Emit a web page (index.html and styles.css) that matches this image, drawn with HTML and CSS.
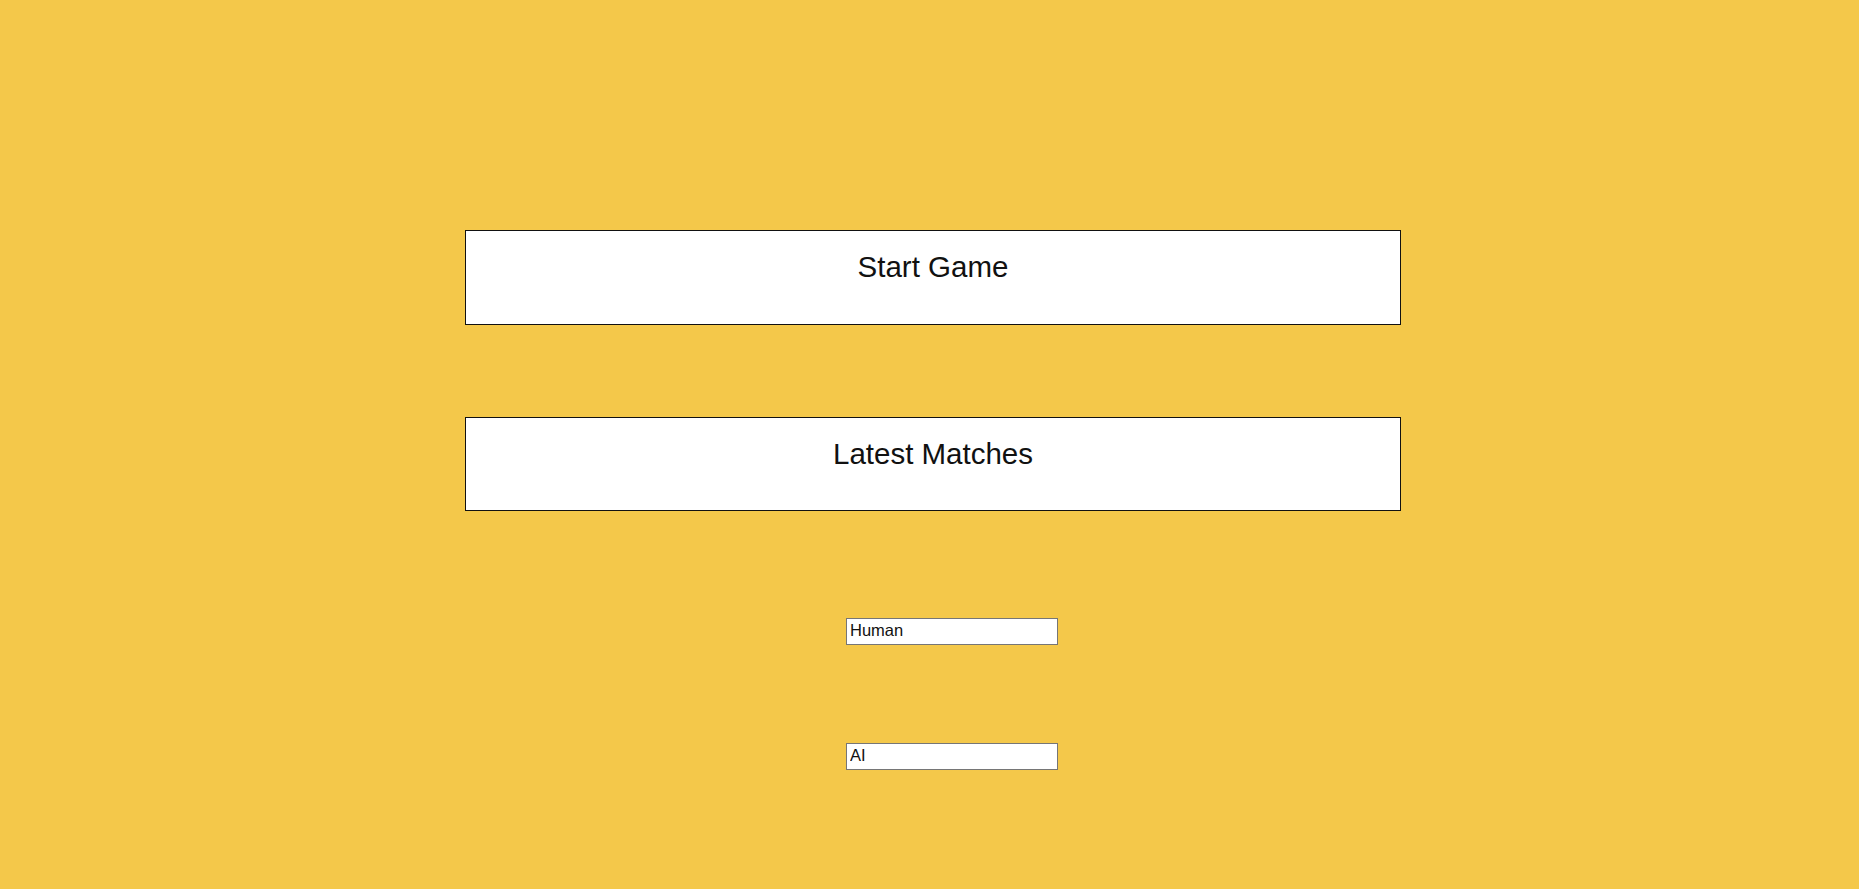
FILE: index.html
```html
<!DOCTYPE html>
<html>
<head>
<meta charset="utf-8">
<link rel="stylesheet" href="styles.css">
</head>
<body>
<main class="menu">
  <div class="panel panel-start"><span class="panel-title">Start Game</span></div>
  <div class="panel panel-matches"><span class="panel-title">Latest Matches</span></div>
  <div class="players">
    <input class="player-input player-human" type="text" value="Human">
    <input class="player-input player-ai" type="text" value="AI">
  </div>
</main>
</body>
</html>
```

FILE: styles.css
```css
html, body {
  margin: 0;
  padding: 0;
  background: #f4c84a;
  height: 100%;
  overflow: hidden;
}
body {
  font-family: "Liberation Sans", Arial, sans-serif;
}
.menu {
  display: flex;
  flex-direction: column;
  width: 936px;
  margin-left: 465px;
  padding-top: 230px;
}
.panel {
  box-sizing: border-box;
  height: 95px;
  background: #fff;
  border: 1px solid #111;
  display: flex;
  justify-content: center;
  align-items: flex-start;
  padding-top: 19px;
}
.panel-matches {
  margin-top: 92px;
  height: 94px;
}
.panel-title {
  font-size: 29.5px;
  line-height: 34px;
  color: #111;
}
.players {
  display: flex;
  flex-direction: column;
  align-items: flex-start;
  padding-left: 381px;
  padding-top: 107px;
  gap: 98px;
}
.player-input {
  box-sizing: border-box;
  width: 212px;
  height: 27px;
  margin: 0;
  border: 1px solid #767676;
  background: #fff;
  padding: 0 3px 2px;
  font-family: "Liberation Sans", Arial, sans-serif;
  font-size: 16.5px;
  color: #111;
  outline: none;
}
```
